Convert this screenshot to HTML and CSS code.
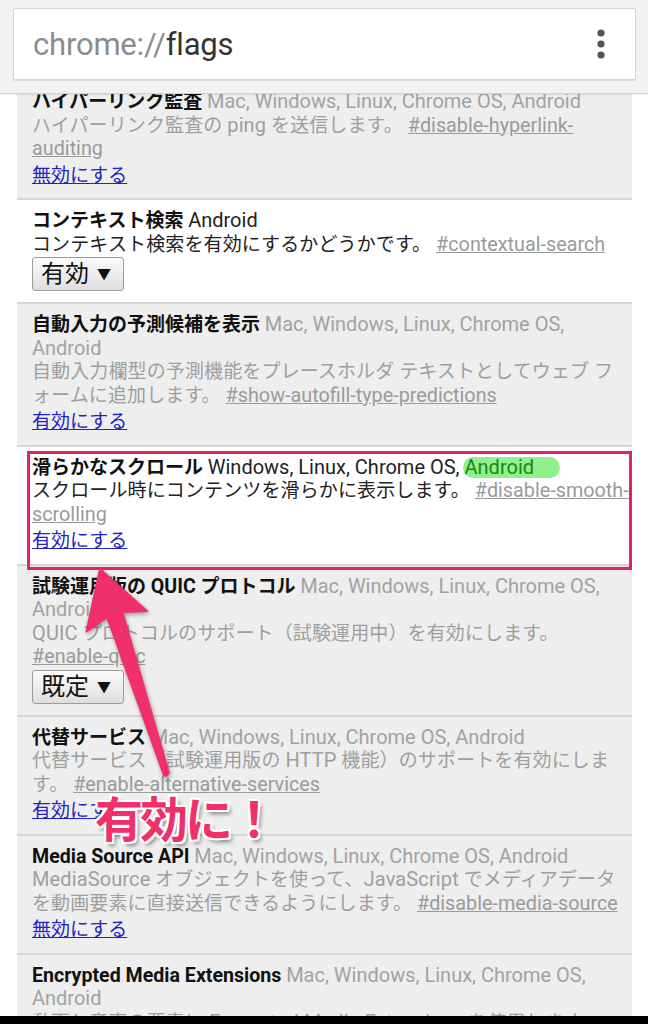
FILE: index.html
```html
<!DOCTYPE html>
<html lang="ja">
<head>
    <meta charset="UTF-8">
    <meta name="viewport" content="width=device-width, initial-scale=1.0">
    <title>chrome://flags</title>
    <link rel="stylesheet" href="styles.css">
</head>
<body>
    <div class="screen">
        <header class="toolbar">
            <div class="omnibox">
                <span class="url"><span class="scheme">chrome://</span>flags</span>
                <svg class="menu" width="8" height="30" viewBox="0 0 8 30">
                    <circle cx="4" cy="4" r="3.6" fill="#555"/>
                    <circle cx="4" cy="15" r="3.6" fill="#555"/>
                    <circle cx="4" cy="26" r="3.6" fill="#555"/>
                </svg>
            </div>
        </header>

        <main class="flags">
            <div class="flag off first">
                <div class="flag-name">ハイパーリンク監査 <span class="platforms">Mac, Windows, Linux, Chrome OS, Android</span></div>
                <div class="flag-desc">ハイパーリンク監査の <span class="en">ping</span> を送信します。 <a class="permalink">#disable-hyperlink-auditing</a></div>
                <a class="toggle">無効にする</a>
            </div>

            <div class="flag on">
                <div class="flag-name">コンテキスト検索 <span class="platforms">Android</span></div>
                <div class="flag-desc">コンテキスト検索を有効にするかどうかです。 <a class="permalink">#contextual-search</a></div>
                <span class="choice">有効 <span class="caret">▼</span></span>
            </div>

            <div class="flag off">
                <div class="flag-name">自動入力の予測候補を表示 <span class="platforms">Mac, Windows, Linux, Chrome OS, Android</span></div>
                <div class="flag-desc">自動入力欄型の予測機能をプレースホルダ テキストとしてウェブ フォームに追加します。 <a class="permalink">#show-autofill-type-predictions</a></div>
                <a class="toggle">有効にする</a>
            </div>

            <div class="flag on marked">
                <div class="flag-name">滑らかなスクロール <span class="platforms">Windows, Linux, Chrome OS, <span class="hilite">Android</span></span></div>
                <div class="flag-desc">スクロール時にコンテンツを滑らかに表示します。 <a class="permalink">#disable-smooth-scrolling</a></div>
                <a class="toggle">有効にする</a>
                <div class="mark-box"></div>
            </div>

            <div class="flag off">
                <div class="flag-name">試験運用版の <span class="en">QUIC</span> プロトコル <span class="platforms">Mac, Windows, Linux, Chrome OS, Android</span></div>
                <div class="flag-desc"><span class="en">QUIC</span> プロトコルのサポート（試験運用中）を有効にします。 <a class="permalink">#enable-quic</a></div>
                <span class="choice">既定 <span class="caret">▼</span></span>
            </div>

            <div class="flag off">
                <div class="flag-name">代替サービス <span class="platforms">Mac, Windows, Linux, Chrome OS, Android</span></div>
                <div class="flag-desc">代替サービス（試験運用版の <span class="en">HTTP</span> 機能）のサポートを有効にします。 <a class="permalink">#enable-alternative-services</a></div>
                <a class="toggle">有効にする</a>
            </div>

            <div class="flag off">
                <div class="flag-name"><span class="en">Media Source API</span> <span class="platforms">Mac, Windows, Linux, Chrome OS, Android</span></div>
                <div class="flag-desc"><span class="en">MediaSource</span> オブジェクトを使って、<span class="en">JavaScript</span> でメディアデータを動画要素に直接送信できるようにします。 <a class="permalink">#disable-media-source</a></div>
                <a class="toggle">無効にする</a>
            </div>

            <div class="flag off">
                <div class="flag-name"><span class="en">Encrypted Media Extensions</span> <span class="platforms">Mac, Windows, Linux, Chrome OS, Android</span></div>
                <div class="flag-desc">動画と音声の要素に <span class="en">Encrypted Media Extensions</span> を使用します。</div>
                <a class="toggle">無効にする</a>
            </div>
        </main>

        <div class="navbar"></div>

        <!-- annotation: arrow pointing at the smooth scrolling flag -->
        <svg class="arrow" width="648" height="1024" viewBox="0 0 648 1024">
            <path d="M100 569 L147 611 L122.4 612.1 L168.8 772.7 Q166.4 777 164 775.3 L107.2 617.1 L86.5 631.5 Z"
                  fill="#f0306b" stroke="#f0306b" stroke-width="2" stroke-linejoin="round"/>
        </svg>
        <div class="callout">有効に！</div>
    </div>
</body>
</html>
```

FILE: styles.css
```css
html, body {
    margin: 0;
    padding: 0;
    background: #fff;
}

body {
    font-family: Roboto, "Noto Sans CJK JP", sans-serif;
    overflow: hidden;
}

.screen {
    position: relative;
    width: 648px;
    height: 1024px;
    display: flex;
    flex-direction: column;
    overflow: hidden;
}

/* top bar */
.toolbar {
    position: relative;
    z-index: 2;
    flex: 0 0 auto;
    height: 94px;
    box-sizing: border-box;
    padding: 8px 12px 0 13px;
    background: #f2f2f2;
    border-bottom: 1px solid #d2d2d2;
    box-shadow: 0 1px 2px rgba(0, 0, 0, 0.08);
}

.omnibox {
    height: 72px;
    box-sizing: border-box;
    display: flex;
    align-items: center;
    justify-content: space-between;
    padding: 0 30px 0 19px;
    background: #fff;
    border: 1px solid #d4d4d4;
    border-radius: 2px;
    box-shadow: 0 1px 1px rgba(0, 0, 0, 0.1);
}

.url {
    font-size: 31px;
    color: #333;
    letter-spacing: -0.2px;
}

.scheme {
    color: #8c8c8c;
}

.menu {
    display: block;
}

/* flag list */
.flags {
    flex: 1 1 auto;
    min-height: 0;
    overflow: hidden;
    margin: -13px 16px 0 17px;
}

.flag {
    position: relative;
    padding: 9px 2px 11px 15px;
    border-top: 2px solid #d6d6d6;
    font-size: 19px;
    line-height: 23.5px;
    color: #222;
}

.flag.first {
    border-top: 0;
}

.flag.off {
    background: #eeeeee;
    color: #9e9e9e;
}

.flag.on {
    background: #fff;
}

.flag-name {
    font-weight: bold;
    color: #111;
}

.flag-desc {
    letter-spacing: 0.12px;
}

/* latin runs are set a little larger, as on the device */
.en,
.platforms,
.permalink {
    font-size: 20px;
}

.flag-name .en {
    font-size: 19.6px;
}

.platforms {
    font-weight: normal;
}

.flag.off .platforms {
    color: #a2a2a2;
}

.flag.on .platforms {
    color: #222;
}

.permalink {
    font-size: 19.8px;
    letter-spacing: 0;
    color: #9a9a9a;
    text-decoration: underline;
}

.toggle {
    display: block;
    margin-top: 3px;
    color: #2222c8;
    text-decoration: underline;
}

.choice {
    display: inline-block;
    margin-top: 1px;
    height: 34px;
    box-sizing: border-box;
    padding: 0 12px 0 8px;
    border: 1px solid #9c9c9c;
    border-radius: 3px;
    background: linear-gradient(#fbfbfb, #dedede);
    color: #111;
    font-size: 24px;
    line-height: 32px;
    vertical-align: top;
}

.caret {
    font-size: 14px;
    vertical-align: 3px;
    margin-left: 2px;
}

.hilite {
    display: inline-block;
    line-height: 21px;
    padding: 0 26px 0 2px;
    margin-left: -2px;
    border-radius: 11px;
    background: #92f08c;
    color: #138a13;
}

.mark-box {
    position: absolute;
    z-index: 1;
    top: 4px;
    bottom: -6px;
    left: 10px;
    right: 0;
    border: 3px solid #e1245e;
    pointer-events: none;
}

.navbar {
    flex: 0 0 8px;
    background: #000;
    position: relative;
    z-index: 2;
}

/* annotations */
.arrow {
    position: absolute;
    left: 0;
    top: 0;
    z-index: 3;
    filter: drop-shadow(1px 2px 2px rgba(0, 0, 0, 0.35));
    pointer-events: none;
}

.callout {
    position: absolute;
    left: 95px;
    top: 786px;
    z-index: 4;
    font-family: "Noto Sans CJK JP", sans-serif;
    font-size: 48px;
    font-weight: bold;
    line-height: 60px;
    letter-spacing: -3px;
    color: #f0306b;
    text-shadow:
        2px 0 0 #fff, -2px 0 0 #fff, 0 2px 0 #fff, 0 -2px 0 #fff,
        2px 2px 0 #fff, -2px -2px 0 #fff, 2px -2px 0 #fff, -2px 2px 0 #fff,
        3px 4px 4px rgba(0, 0, 0, 0.45);
}
```
